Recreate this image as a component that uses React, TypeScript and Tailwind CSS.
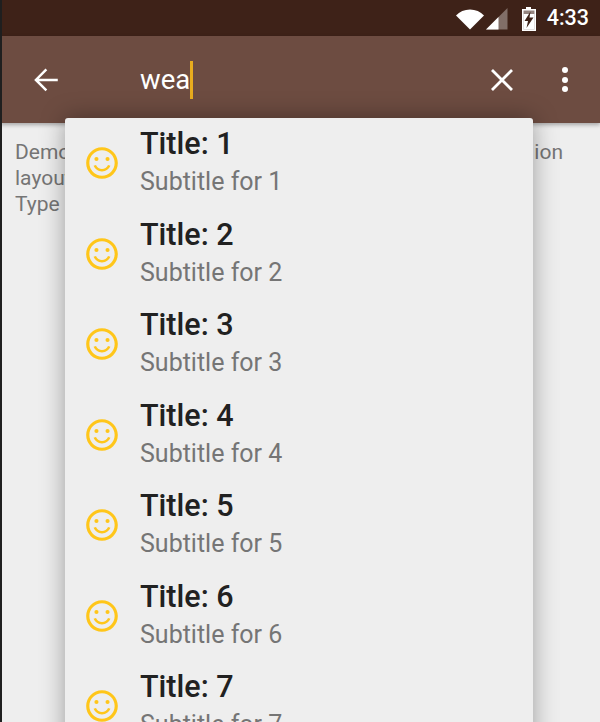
const rows = [1, 2, 3, 4, 5, 6, 7];

function Smiley() {
  return (
    <svg width="38" height="38" viewBox="0 0 24 24" fill="#ffc61a" className="shrink-0">
      <path d="M11.99 2C6.47 2 2 6.48 2 12s4.47 10 9.99 10C17.52 22 22 17.52 22 12S17.52 2 11.99 2zM12 20c-4.420 0-8-3.580-8-8s3.580-8 8-8 8 3.580 8 8-3.580 8-8 8z" />
      <circle cx="15.500" cy="9.500" r="1.300" />
      <circle cx="8.500" cy="9.500" r="1.300" />
      <path d="M12 17.300c2.400 0 4.400-1.400 5.300-3.500l-1.500-.6c-.7 1.600-2.200 2.600-3.800 2.600s-3.100-1-3.800-2.600l-1.500.6c.9 2.100 2.900 3.500 5.300 3.500z" />
    </svg>
  );
}

function Row({ n }: { n: number }) {
  return (
    <div className="flex h-[90.5px] shrink-0 items-center">
      <div className="flex w-[75px] shrink-0 justify-center pr-[2px]">
        <Smiley />
      </div>
      <div className="mb-[3px] flex flex-col">
        <span className="text-[30.5px] leading-[36px] font-medium text-[#212121]">Title: {n}</span>
        <span className="mt-[5px] text-[25px] leading-[30px] text-[#757575]">Subtitle for {n}</span>
      </div>
    </div>
  );
}

export default function App() {
  return (
    <div className="relative flex h-[722px] w-[600px] flex-col overflow-hidden bg-[#eeeeee] font-['Roboto',sans-serif]">
      {/* Status bar */}
      <div className="flex h-[36px] shrink-0 items-center justify-end bg-[#3e2218] pr-[11px]">
        <svg width="28" height="22" viewBox="0 0 28 22" className="mt-[1px]">
          <path d="M0 7.500C3.500 3.500 8.500 1.500 14 1.500s10.500 2 14 6L14 21.500z" fill="#fff" />
        </svg>
        <svg width="23" height="23" viewBox="0 0 23 23" className="ml-[2px]">
          <path d="M0 22.500 21.500 1v21.500z" fill="#fff" fillOpacity="0.35" />
          <path d="M0 22.500 12.500 10v12.500z" fill="#fff" />
        </svg>
        <svg width="16" height="24" viewBox="0 0 16 24" className="mt-[1px] ml-[12px]">
          <path d="M5 0h5v2h5v22H1V2h4z" fill="#fff" fillOpacity="0.45" />
          <path d="M5 0h5v2h5v22H1V2h4zM2.500 3.500v19h11v-19z" fill="#fff" fillRule="evenodd" />
          <path d="M2.500 7h11v15.500h-11z" fill="#fff" />
          <path d="M9.500 4.500 3.500 14H7l-1.500 7 7-10.500H8.500z" fill="#3e2218" />
        </svg>
        <span className="ml-[10px] text-[21.5px] leading-none font-medium text-white">4:33</span>
      </div>

      {/* Toolbar */}
      <div className="relative flex h-[87px] shrink-0 items-center bg-[#6d4c41] shadow-[0_2px_4px_rgba(0,0,0,0.3)]">
        <div className="flex w-[92px] shrink-0 justify-center">
          <svg width="24" height="24" viewBox="0 0 24 24" fill="none" stroke="#fff" strokeWidth="2.600">
            <path d="M24.500 12H1.500M12.500 1 1.500 12l11 11" transform="translate(0.500 0.500) scale(0.95)" />
          </svg>
        </div>
        <div className="ml-[48px] flex flex-1 items-center">
          <span className="text-[27.500px] leading-none text-white">wea</span>
          <span className="h-[38px] w-[3px] bg-[#e8ac1e]" />
        </div>
        <svg width="24" height="24" viewBox="0 0 24 24" fill="none" stroke="#fff" strokeWidth="2.800" className="mr-[48px]">
          <path d="M2 2l20 20M22 2 2 22" />
        </svg>
        <div className="mr-[32px] flex flex-col gap-[3.500px]">
          <span className="h-[6px] w-[6px] rounded-full bg-white" />
          <span className="h-[6px] w-[6px] rounded-full bg-white" />
          <span className="h-[6px] w-[6px] rounded-full bg-white" />
        </div>
      </div>

      {/* Page body behind the dropdown */}
      <div className="flex-1 pt-[16px] pr-[37px] pl-[15px] text-[21px] leading-[26px] text-[#757575]">
        <div className="flex justify-between">
          <span>Demo</span>
          <span>ion</span>
        </div>
        <div>layout</div>
        <div>Type</div>
      </div>

      {/* Dark sliver along the left edge of the capture */}
      <div className="absolute top-0 bottom-0 left-0 w-[2px] bg-[#1f1f1f]" />

      {/* Dropdown */}
      <div className="absolute top-[118px] left-[65px] flex h-[640px] w-[468px] flex-col overflow-hidden rounded-[3px] bg-[#eeeeee] shadow-[0_0_24px_rgba(0,0,0,0.35)]">
        {rows.map((n) => (
          <Row key={n} n={n} />
        ))}
      </div>
    </div>
  );
}
